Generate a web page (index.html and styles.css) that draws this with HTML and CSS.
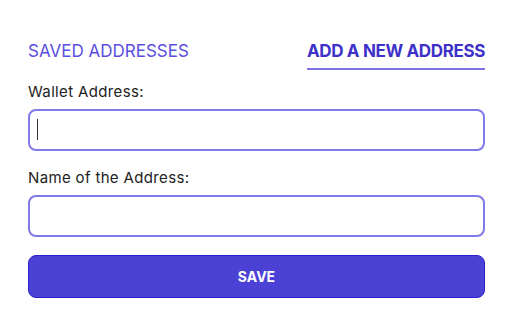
FILE: index.html
```html
<!DOCTYPE html>
<html>
<head>
<meta charset="utf-8">
<link rel="stylesheet" href="styles.css">
</head>
<body>
<div class="panel">
  <div class="tabs">
    <div class="tab">SAVED ADDRESSES</div>
    <div class="tab active">ADD A NEW ADDRESS</div>
  </div>
  <label class="label">Wallet Address:</label>
  <div class="field">
    <input class="input" type="text">
    <span class="caret"></span>
  </div>
  <label class="label second">Name of the Address:</label>
  <div class="field">
    <input class="input" type="text">
  </div>
  <button class="save">SAVE</button>
</div>
</body>
</html>
```
FILE: styles.css
```css
html, body {
  margin: 0;
  background: #ffffff;
}
.panel {
  padding: 41px 27px 0 28px;
  font-family: Inter, "Liberation Sans", sans-serif;
  display: flex;
  flex-direction: column;
}
.tabs {
  display: flex;
  justify-content: space-between;
  align-items: flex-start;
}
.tab {
  font-size: 17px;
  color: #5a4fe0;
  padding: 0 0 7px;
  line-height: 20px;
}
.tab.active {
  font-weight: 700;
  letter-spacing: -0.35px;
  color: #3d31c9;
  border-bottom: 2px solid #7b72e3;
}
.label {
  font-size: 15px;
  letter-spacing: 0.35px;
  color: #222222;
  margin-top: 13px;
  line-height: 18px;
}
.label.second {
  margin-top: 18px;
}
.field {
  position: relative;
  margin-top: 8px;
}
.input {
  box-sizing: border-box;
  width: 100%;
  height: 42px;
  border: 2px solid #8179e8;
  border-radius: 8px;
  outline: none;
  display: block;
  background: #fff;
}
.caret {
  position: absolute;
  left: 9px;
  top: 10px;
  width: 1px;
  height: 21px;
  background: #333;
}
.save {
  margin-top: 18px;
  height: 43px;
  border: 1px solid #2c1fd0;
  border-radius: 8px;
  background: #4c41d5;
  color: #ffffff;
  font-family: Inter, "Liberation Sans", sans-serif;
  font-weight: 700;
  font-size: 14px;
}
```
